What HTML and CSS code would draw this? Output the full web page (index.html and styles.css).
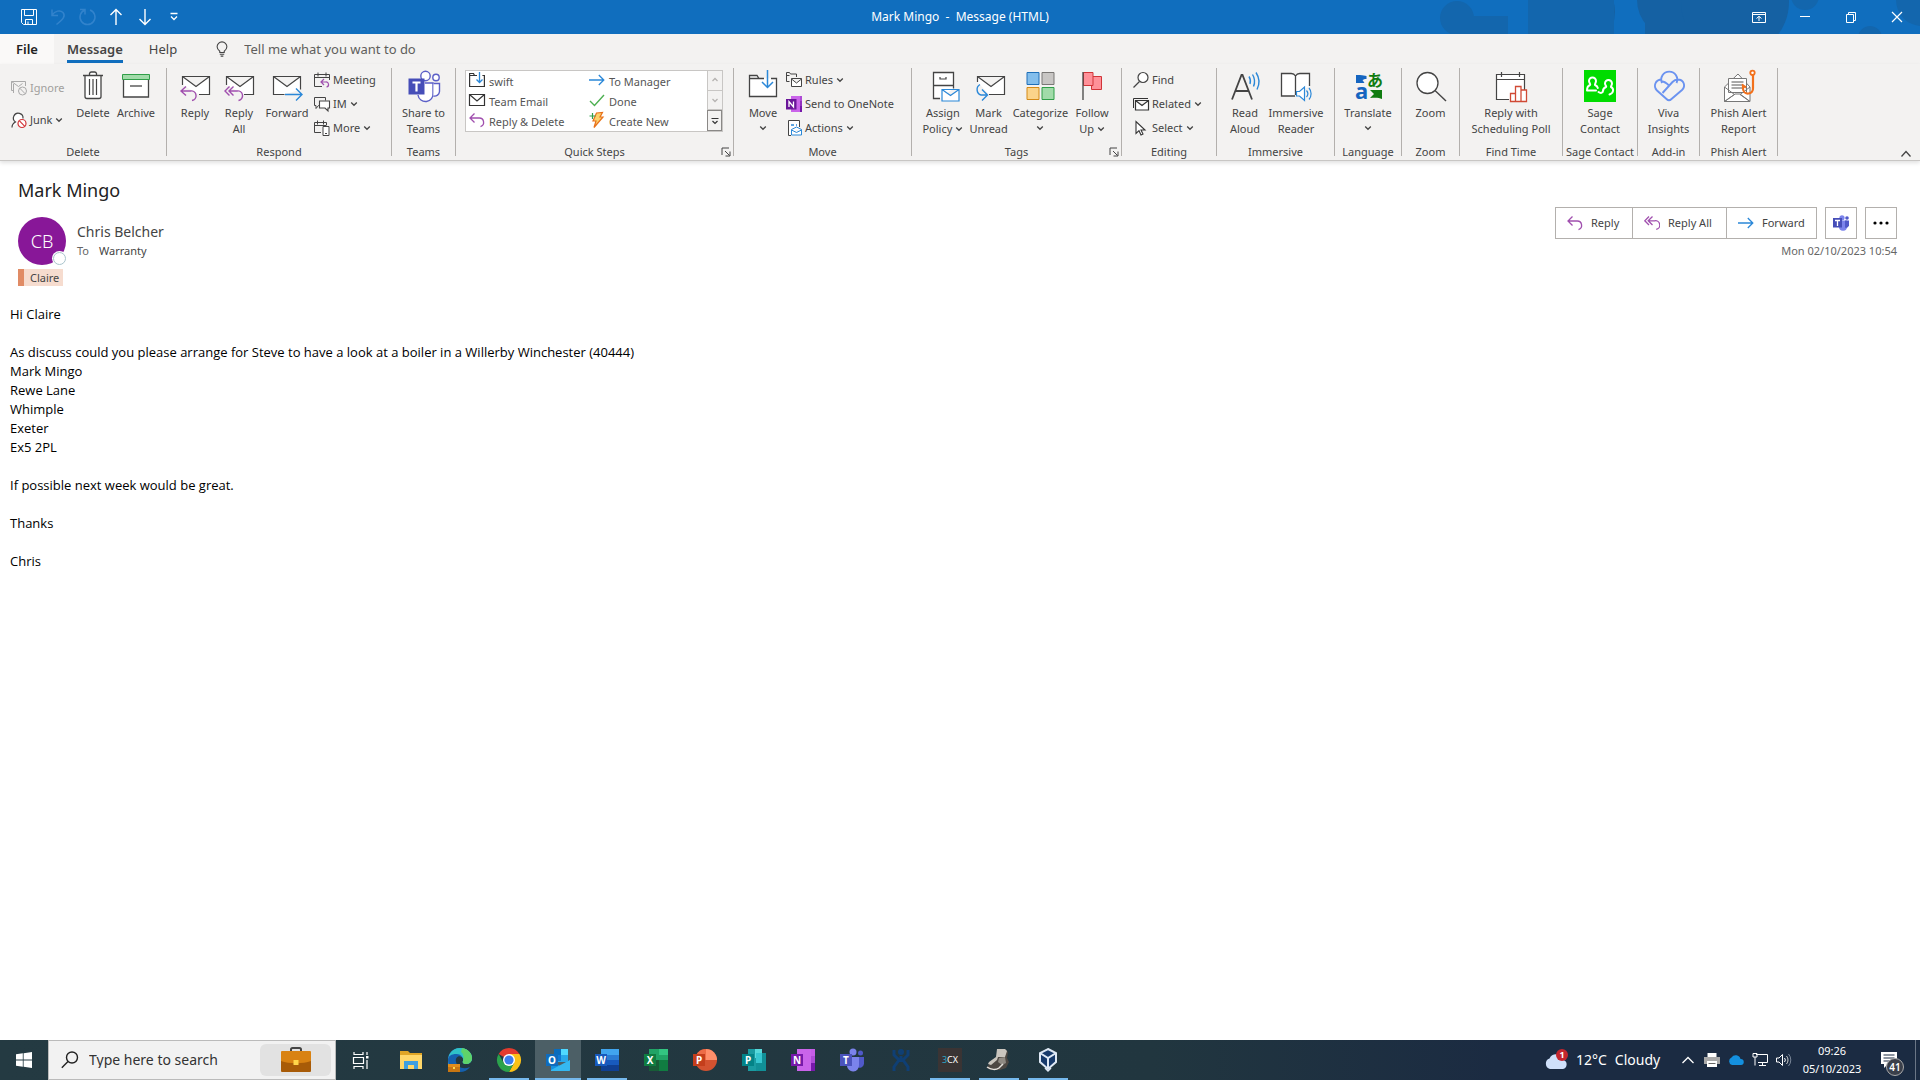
FILE: index.html
```
<!DOCTYPE html>
<html lang="en">
<head>
<meta charset="utf-8">
<title>Mark Mingo - Message (HTML)</title>
<link rel="stylesheet" href="styles.css">
</head>
<body>
<svg class="defs" aria-hidden="true">
  <symbol id="chev" viewBox="0 0 8 8"><path d="M1.200 2.500 4 5.300 6.800 2.500" fill="none" stroke="#444" stroke-width="1.300"/></symbol>
  <symbol id="arrow-reply" viewBox="0 0 16 16"><path d="M5.500 1.500 1 6l4.500 4.500M1 6h9a4.400 4.400 0 0 1 1.500 8.600" fill="none" stroke="#a04fae" stroke-width="1.300"/></symbol>
  <symbol id="arrow-all" viewBox="0 0 16 16"><path d="M5 1.500.8 5.800 5 10M8.500 1.500 4.200 5.800 8.500 10M4.200 5.800h6.500a4.300 4.300 0 0 1 1.500 8.500" fill="none" stroke="#a04fae" stroke-width="1.300"/></symbol>
  <symbol id="arrow-fwd" viewBox="0 0 16 16"><path d="M0 8h15M9.800 3l5 5-5 5" fill="none" stroke="#2b88d8" stroke-width="1.300"/></symbol>
  <symbol id="folder-move" viewBox="0 0 16 16"><path d="M.6 1.500h4l1 2H15.400v11H.6z" fill="#fff"/><path d="M8 3.500H5.500l-1-2H.6v13h14.800v-11h-2M.6 3.500h5" fill="none" stroke="#333" stroke-width="1.200"/><path d="M10.500 0v10.500M7.500 7.500l3 3 3-3" fill="none" stroke="#2b88d8" stroke-width="1.300"/></symbol>
  <symbol id="launch" viewBox="0 0 10 10"><path d="M1 8V1h7M4 4l4.500 4.500M9 4.500V9H4.500" fill="none" stroke="#444"/></symbol>
</svg>

<header class="titlebar">
  <svg class="clouds" viewBox="0 0 520 34" aria-hidden="true">
    <g class="soft"><circle cx="57" cy="18" r="17"/><rect x="50" y="16" width="58" height="18"/><circle cx="405" cy="-4" r="14"/><circle cx="470" cy="38" r="12"/><circle cx="522" cy="0" r="26"/></g>
    <g class="deep"><circle cx="172" cy="12" r="43"/><circle cx="275" cy="0" r="38"/><circle cx="335" cy="2" r="54"/><rect x="245" y="22" width="100" height="12"/></g>
    <g class="soft"><rect x="128" y="0" width="86" height="34"/></g>
  </svg>
  <div class="quick">
    <button aria-label="Save"><svg viewBox="0 0 18 18"><path d="M1.500 1.500h15v15h-13l-2-2zM4.500 1.500v6h9v-6M5.500 16.500v-5h7v5M8 13.500v3" stroke="#fff"/></svg></button>
    <button aria-label="Undo"><svg viewBox="0 0 18 18"><path d="M3 1.500v6h6M3 7C6 3 11 1.500 14 4.500c3 3.500 0 7-6.500 12" stroke="#3283cc" stroke-width="1.500"/></svg></button>
    <button aria-label="Redo"><svg viewBox="0 0 18 18"><path d="M2 1.500h5v5M7 2a7.500 7.500 0 1 0 5 0" stroke="#3283cc" stroke-width="1.500"/></svg></button>
    <button aria-label="Previous item"><svg viewBox="0 0 18 18"><path d="M9 17V1.500M3.500 7 9 1.500 14.500 7" stroke="#fff" stroke-width="1.400"/></svg></button>
    <button aria-label="Next item"><svg viewBox="0 0 18 18"><path d="M9 1v15.500M3.500 11 9 16.500 14.500 11" stroke="#fff" stroke-width="1.400"/></svg></button>
    <button aria-label="Customize Quick Access Toolbar"><svg viewBox="0 0 18 18"><path d="M5.500 5.500h7M6 8.500l3 3 3-3" stroke="#fff" stroke-width="1.300"/></svg></button>
  </div>
  <h1 class="caption">Mark Mingo&nbsp; - &nbsp;Message (HTML)</h1>
  <div class="window-btns">
    <button aria-label="Ribbon display options"><svg viewBox="0 0 14 14"><path d="M.5 2.500h13v10H.5zM.5 4.500h13M7 11V6.500M4.500 8.500 7 6.300l2.500 2.200" stroke="#fff"/></svg></button>
    <button aria-label="Minimize"><svg viewBox="0 0 14 14"><path d="M2 6.500h10" stroke="#fff"/></svg></button>
    <button aria-label="Restore"><svg viewBox="0 0 14 14"><path d="M2.500 4.500h7v8h-7zM4.500 4V2.500h7v8H10" stroke="#fff"/></svg></button>
    <button aria-label="Close"><svg viewBox="0 0 14 14"><path d="m2 2 10 10M12 2 2 12" stroke="#fff" stroke-width="1.200"/></svg></button>
  </div>
</header>

<nav class="tabs">
  <button class="tab file">File</button>
  <button class="tab active"><span>Message</span></button>
  <button class="tab">Help</button>
  <label class="tellme">
    <svg viewBox="0 0 16 18" aria-hidden="true"><path d="M5.500 13v-1.500C3.500 10 2.500 8.500 2.500 6.500a5.500 5.500 0 0 1 11 0c0 2-1 3.500-3 5V13zM5.500 15h5M6.500 17h3" fill="none" stroke="#444" stroke-width="1.200"/></svg>
    <input type="text" placeholder="Tell me what you want to do" aria-label="Tell me what you want to do">
  </label>
</nav>

<section class="ribbon" aria-label="Ribbon">
  <div class="group g-delete">
    <div class="tools">
      <div class="stack two">
        <button class="small off"><svg viewBox="0 0 16 16"><path d="M3 10.500H.500V1.500h14V6M.5 1.500l7 5 4-3M2.500 13V4" fill="none" stroke="#aaa"/><circle cx="11.500" cy="11" r="4" fill="#f3f2f1" stroke="#aaa"/><path d="m8.800 8.200 5.400 5.600" stroke="#aaa"/></svg>Ignore</button>
        <button class="small"><svg viewBox="0 0 16 16"><path d="M1 15.500c0-3 1.500-4.500 3.500-5.500A4.800 4.800 0 1 1 12 6.500" fill="#fff" stroke="#444" stroke-width="1.200"/><circle cx="11" cy="11.500" r="4" fill="#fff" stroke="#d13438" stroke-width="1.200"/><path d="m8.200 8.700 5.600 5.600" stroke="#d13438" stroke-width="1.200"/></svg>Junk<svg class="chev"><use href="#chev"/></svg></button>
      </div>
      <button class="big w38"><svg viewBox="0 0 32 32"><path d="M8 5.500h16v21a2 2 0 0 1-2 2H10a2 2 0 0 1-2-2zM6 5.500h20M12.500 5V3.500a2 2 0 0 1 2-1.500h3a2 2 0 0 1 2 1.500V5" fill="#fff" stroke="#444" stroke-width="1.300"/><path d="M12.500 9v16M16 9v16M19.500 9v16" stroke="#444" stroke-width="1.200"/></svg><span>Delete</span></button>
      <button class="big w48"><svg viewBox="0 0 32 32"><path d="M3.500 9h25v18h-25z" fill="#fff" stroke="#444" stroke-width="1.300"/><path d="M2.500 4.500h27v5h-27z" fill="#a1dba9" stroke="#2f9e48"/><path d="M10 16h12" stroke="#444" stroke-width="1.300"/></svg><span>Archive</span></button>
    </div>
    <div class="label"><span>Delete</span></div>
  </div>

  <div class="group g-respond">
    <div class="tools">
      <button class="big w40"><svg viewBox="0 0 32 32"><path d="M3.500 15V6.500h27v18H20M3.500 6.500 17 16.500l13.500-10" fill="#fff" stroke="#444" stroke-width="1.200"/><path d="M7 16.500 2 21l5 4.500M2 21h9.500a4.700 4.700 0 0 1 1.500 9.500" fill="none" stroke="#a04fae" stroke-width="1.400"/></svg><span>Reply</span></button>
      <button class="big w48"><svg viewBox="0 0 32 32"><path d="M3.500 15V6.500h27v18H21M3.500 6.500 17 16.500l13.500-10" fill="#fff" stroke="#444" stroke-width="1.200"/><path d="M6.500 16.500 2 21l4.500 4.500M10.500 16.500 6 21l4.500 4.500M6 21h8a4.700 4.700 0 0 1 1.500 9.500" fill="none" stroke="#a04fae" stroke-width="1.400"/></svg><span>Reply<br>All</span></button>
      <button class="big w48"><svg viewBox="0 0 32 32"><path d="M13.500 24.500H2.500v-18h27v13M2.500 6.500 16 16.500l13.500-10" fill="#fff" stroke="#444" stroke-width="1.200"/><path d="M14 24.500h17M25 18.500l6 6-6 6" fill="none" stroke="#2b88d8" stroke-width="1.400"/></svg><span>Forward</span></button>
      <div class="stack">
        <button class="small"><svg viewBox="0 0 16 16"><path d="M8 14.500H.500v-12h15V8M.5 5.500h15M4 .5v4M12 .5v4" fill="none" stroke="#444"/><path d="M10 7 7 10l3 3M7 10h4.500a2.500 2.500 0 0 1 1 5" fill="none" stroke="#a04fae" stroke-width="1.200"/></svg>Meeting</button>
        <button class="small"><svg viewBox="0 0 16 16"><path d="M5.500 9.500h-1l-2.500 3v-3H.5v-8h11v3" fill="none" stroke="#444"/><path d="M5.500 5h10v7h-1.500v3l-3-3H5.500z" fill="#fff" stroke="#444" stroke-width="1.100"/></svg>IM<svg class="chev"><use href="#chev"/></svg></button>
        <button class="small"><svg viewBox="0 0 16 16"><path d="M7 12.500H.5v-10h12V5M.5 5.500h12M3.500.5v4M9.500.5v4" fill="none" stroke="#444"/><path d="M9 6.500h6v9H9zM11 13.500h2" fill="#fff" stroke="#444"/></svg>More<svg class="chev"><use href="#chev"/></svg></button>
      </div>
    </div>
    <div class="label"><span>Respond</span></div>
  </div>

  <div class="group g-teams">
    <div class="tools center">
      <button class="big w58"><svg viewBox="0 0 32 32"><g fill="#fff" stroke="#5b5fc7" stroke-width="1.400"><circle cx="17.500" cy="6" r="4.700"/><circle cx="28" cy="7.500" r="3.200"/><path d="M17 13h8v10a7.500 7.500 0 0 1-15 2"/><path d="M25.500 13.500h6v8a5 5 0 0 1-6 4.500"/></g><path d="M.500 8.500h16v16H.500z" fill="#464eb8"/><path d="M4.500 12.500h8M8.500 12.500v9" stroke="#fff" stroke-width="2.200"/></svg><span>Share to<br>Teams</span></button>
    </div>
    <div class="label"><span>Teams</span></div>
  </div>

  <div class="group g-quick">
    <div class="tools">
      <div class="gallery">
        <div class="steps">
          <button><svg><use href="#folder-move"/></svg>swift</button>
          <button><svg><use href="#arrow-fwd"/></svg>To Manager</button>
          <button><svg viewBox="0 0 16 16"><path d="M.5 2.500h15v11H.5zM.5 2.500 8 9l7.500-6.500" fill="#fff" stroke="#333" stroke-width="1.200"/></svg>Team Email</button>
          <button><svg viewBox="0 0 16 16"><path d="m1 9 4.500 4.500L15 3" fill="none" stroke="#4caf50" stroke-width="1.400"/></svg>Done</button>
          <button><svg><use href="#arrow-reply"/></svg>Reply &amp; Delete</button>
          <button><svg viewBox="0 0 16 16"><path d="m7.500 1 6-.5-2.500 4.500h3L5 15.500l2-6.500H4z" fill="#fbd26a" stroke="#e8711c" stroke-width="1.200"/><path d="M3.500 1v6M.5 4h6" stroke="#2f9e48" stroke-width="1.200"/></svg>Create New</button>
        </div>
        <div class="scroll">
          <button aria-label="Scroll up" disabled><svg viewBox="0 0 8 8"><path d="M1.500 5 4 2.500 6.500 5" fill="none" stroke="#b5b3b1" stroke-width="1.300"/></svg></button>
          <button aria-label="Scroll down" disabled><svg viewBox="0 0 8 8"><path d="M1.500 3 4 5.500 6.500 3" fill="none" stroke="#b5b3b1" stroke-width="1.300"/></svg></button>
          <button aria-label="More quick steps"><svg viewBox="0 0 8 8"><path d="M.5 1.500h7M1.500 4 4 6.500 6.500 4" fill="none" stroke="#333" stroke-width="1.200"/></svg></button>
        </div>
      </div>
    </div>
    <div class="label"><span>Quick Steps</span><button class="launch" aria-label="Quick Steps options"><svg><use href="#launch"/></svg></button></div>
  </div>

  <div class="group g-move">
    <div class="tools">
      <button class="big w46"><svg viewBox="0 0 32 32"><path d="M2.500 5.500H10l2 3h17.500v18h-27z" fill="#fff"/><path d="M17 8.500h-5l-2-3H2.500v21h27v-18H24M2.500 8.500H12" fill="none" stroke="#444" stroke-width="1.300"/><path d="M20.500 0v17.500M15 12l5.500 5.500L26 12" fill="none" stroke="#2b88d8" stroke-width="1.500"/></svg><span>Move</span><svg class="chev"><use href="#chev"/></svg></button>
      <div class="stack">
        <button class="small"><svg viewBox="0 0 16 16"><path d="M3.500 9.500h-3v-9h3l1 1.500h6v3M.5 3.500h3" fill="none" stroke="#444"/><path d="M5.500 6.500h10v8h-10zM5.500 7l5 4 5-4" fill="#fff" stroke="#444"/></svg>Rules<svg class="chev"><use href="#chev"/></svg></button>
        <button class="small"><svg viewBox="0 0 16 16"><path d="M5 0h9.500v16H5z" fill="#ca64ea"/><path d="M14 0h2v5h-2z" fill="#ae4bd5"/><path d="M14 5h2v5h-2z" fill="#9332bf"/><path d="M14 10h2v6h-2z" fill="#7719aa"/><path d="M0 3h10.500v10.500H0z" fill="#6a1599"/><path d="M3 11V5.500L7.500 11V5.500" fill="none" stroke="#fff" stroke-width="1.300"/></svg>Send to OneNote</button>
        <button class="small"><svg viewBox="0 0 16 16"><path d="M5 15.500H2.500V.5h11V7" fill="#fff" stroke="#444"/><path d="M5 5h3M10 5h1" stroke="#2b88d8" stroke-width="1.600"/><path d="M5.500 9.500 10.500 7l5 2.500v5.500h-10zM5.500 10l5 2.500 5-2.500" fill="#fff" stroke="#2b88d8"/></svg>Actions<svg class="chev"><use href="#chev"/></svg></button>
      </div>
    </div>
    <div class="label"><span>Move</span></div>
  </div>

  <div class="group g-tags">
    <div class="tools">
      <button class="big w46"><svg viewBox="0 0 32 32"><path d="M13 28.500H6.500v-26h20v16M6.500 15.500h20" fill="#fff" stroke="#444" stroke-width="1.300"/><path d="M13 7v2h6V7" fill="none" stroke="#444" stroke-width="1.200"/><path d="M15 19.500h17v11.500H15zM15 19.500l8.500 6 8.500-6" fill="#fff" stroke="#2b88d8" stroke-width="1.200"/></svg><span>Assign<br>Policy<svg class="chev"><use href="#chev"/></svg></span></button>
      <button class="big w46"><svg viewBox="0 0 32 32"><path d="M4.500 12V6.500h27v18H16M4.500 6.500 18 16.500l13.500-10" fill="#fff" stroke="#444" stroke-width="1.200"/><path d="M7 14.500a5.800 5.800 0 0 0 1 10.500h5.500M9 19.500l5.500 5.500L9 30.500" fill="none" stroke="#2b88d8" stroke-width="1.400"/></svg><span>Mark<br>Unread</span></button>
      <button class="big w58"><svg viewBox="0 0 32 32"><path d="M3 2.500h12v12H3z" fill="#83beec" stroke="#1e6fb8"/><path d="M18 2.500h12v12H18z" fill="#c8c6c4" stroke="#797775"/><path d="M3 17.500h12v12H3z" fill="#fbd48a" stroke="#d48a17"/><path d="M18 17.500h12v12H18z" fill="#a1dba9" stroke="#2f9e48"/></svg><span>Categorize</span><svg class="chev"><use href="#chev"/></svg></button>
      <button class="big w46"><svg viewBox="0 0 32 32"><path d="M15.500 6.500h10v13h-10z" fill="#ff9199" stroke="#d13438"/><path d="M7.500 2.500h9.500v13H7.500z" fill="#ff9199" stroke="#d13438"/><path d="M7 2v28" stroke="#444" stroke-width="1.300"/></svg><span>Follow<br>Up<svg class="chev"><use href="#chev"/></svg></span></button>
    </div>
    <div class="label"><span>Tags</span><button class="launch" aria-label="Tags options"><svg><use href="#launch"/></svg></button></div>
  </div>

  <div class="group g-editing">
    <div class="tools">
      <div class="stack">
        <button class="small"><svg viewBox="0 0 16 16"><circle cx="10" cy="5.500" r="5" fill="#fff" stroke="#444" stroke-width="1.200"/><path d="M6.500 9.500.5 15.500" stroke="#444" stroke-width="1.200"/></svg>Find</button>
        <button class="small"><svg viewBox="0 0 16 16"><path d="M.5 12V2.500H15" fill="none" stroke="#333"/><path d="M2.500 4.500h13v9.500h-13zM2.500 4.500l6.500 5 6.500-5" fill="#fff" stroke="#333" stroke-width="1.200"/></svg>Related<svg class="chev"><use href="#chev"/></svg></button>
        <button class="small"><svg viewBox="0 0 16 16"><path d="M3 1.500v12l3-2.800 2 4.300 2-1-2-4h4z" fill="#fff" stroke="#333" stroke-width="1.100"/></svg>Select<svg class="chev"><use href="#chev"/></svg></button>
      </div>
    </div>
    <div class="label"><span>Editing</span></div>
  </div>

  <div class="group g-immersive">
    <div class="tools">
      <button class="big w40"><svg viewBox="0 0 32 32"><path d="M3 29.500 12.500 5h1L23 29.500M6.500 21h13" fill="none" stroke="#444" stroke-width="1.800"/><path d="M20 6.500a9 9 0 0 1 1 7.500M23.500 4.500a13 13 0 0 1 1 12M27 2.500a17 17 0 0 1 1 17" fill="none" stroke="#2b88d8" stroke-width="1.400"/></svg><span>Read<br>Aloud</span></button>
      <button class="big w62"><svg viewBox="0 0 32 32"><path d="M15 26H1.500V3.500H11a5 5 0 0 1 4.500 2.500A5 5 0 0 1 20 3.500h9.500V16M15.500 6v19" fill="#fff" stroke="#444" stroke-width="1.300"/><path d="M16.500 21.500h3l5-4.500v13.500l-5-4.500h-3z" fill="#fff" stroke="#2b88d8" stroke-width="1.200"/><path d="M26.500 20.500a5 5 0 0 1 0 6.500M29 18a9 9 0 0 1 0 11.500" fill="none" stroke="#2b88d8" stroke-width="1.200"/></svg><span>Immersive<br>Reader</span></button>
    </div>
    <div class="label"><span>Immersive</span></div>
  </div>

  <div class="group g-language">
    <div class="tools center">
      <button class="big w58"><svg viewBox="0 0 32 32"><path d="M4 5h4c3 0 4.500 1 6.500 1v3c-2 0-3 .5-4 1l2 3H4z" fill="#1565c0"/><text class="glyph-a" x="3" y="29">a</text><text class="glyph-ja" x="15" y="16">あ</text><path d="M18 20h12v9c-3-1.500-7-1.500-12-1l4-4z" fill="#107c10"/></svg><span>Translate</span><svg class="chev"><use href="#chev"/></svg></button>
    </div>
    <div class="label"><span>Language</span></div>
  </div>

  <div class="group g-zoom">
    <div class="tools center">
      <button class="big w48"><svg viewBox="0 0 32 32"><circle cx="12.500" cy="13" r="10.500" fill="#fff" stroke="#444" stroke-width="1.300"/><path d="M20 20.500 31 31" stroke="#444" stroke-width="1.400"/></svg><span>Zoom</span></button>
    </div>
    <div class="label"><span>Zoom</span></div>
  </div>

  <div class="group g-find">
    <div class="tools center">
      <button class="big w94"><svg viewBox="0 0 32 32"><path d="M14 29.500H1.500v-25h28V20M1.500 9.500h28M6.500 2v5M24.500 2v5" fill="#fff" stroke="#444" stroke-width="1.200"/><path d="M15.500 23.500h5v8h-5zM20.500 16.500h5.500v15h-5.500zM26 20h5.500v11.500H26z" fill="#fff" stroke="#d04a35" stroke-width="1.300"/></svg><span>Reply with<br>Scheduling Poll</span></button>
    </div>
    <div class="label"><span>Find Time</span></div>
  </div>

  <div class="group g-sage">
    <div class="tools center">
      <button class="big w58"><svg viewBox="0 0 32 32"><path d="M0 0h32v32H0z" fill="#00dc00"/><g fill="none" stroke="#fff" stroke-width="2" stroke-linecap="round" stroke-linejoin="round"><path d="M12 20.500H3c0-3 .5-4.500 3-5.500 1-1-1-2-1-4a3.500 3.500 0 0 1 7 0c0 2-1.500 3-1 4 1.500.6 2.500 1.500 2.800 3M14.500 22c2 1.500 4.500 1 4.500-1 0-2 .5-3 3-4 1-1-1-1.500-1-3.500a3.500 3.500 0 0 1 7 0c0 2-1.500 2.500-1 3.500 3 1.500 3 6-1.500 7.500"/></g></svg><span>Sage<br>Contact</span></button>
    </div>
    <div class="label"><span>Sage Contact</span></div>
  </div>

  <div class="group g-viva">
    <div class="tools center">
      <button class="big w48"><svg viewBox="0 0 32 32"><g fill="none" stroke="#6b93f0" stroke-width="1.900"><path d="M9 13a8 8 0 1 1 14.500 0M9 9.500c-7 0-9 7-5 11l9.500 8.500c1.500 1.500 3.500 1.500 5 0L29 20c4-4 2-10.500-4.500-10.500-2 0-3.500 1-5 2.500L9.500 23"/><path d="M9 11.500c2 0 3.500.5 7 4"/></g></svg><span>Viva<br>Insights</span></button>
    </div>
    <div class="label"><span>Add-in</span></div>
  </div>

  <div class="group g-phish">
    <div class="tools center">
      <button class="big w62"><svg viewBox="0 0 32 32"><path d="M1.500 17 15 4l12 13v14.500h-25.500z" fill="#fff" stroke="#777"/><path d="M5.500 8.500h18v14h-18z" fill="#fff" stroke="#777"/><path d="M8.500 12h12M8.500 15h12M8.500 18h12" stroke="#555"/><path d="m1.500 17 10 7.500-10 7M27 17l-10 7.500 10 7M1.500 31.500 12 24h5l10 7.500" fill="none" stroke="#777"/><circle cx="29.500" cy="2.800" r="2.200" fill="#fff" stroke="#f2711c" stroke-width="1.800"/><path d="M30 5v13a5 5 0 0 1-10 1v-3.500l3 2" fill="none" stroke="#f2711c" stroke-width="2.200"/></svg><span>Phish Alert<br>Report</span></button>
    </div>
    <div class="label"><span>Phish Alert</span></div>
  </div>
  <button class="collapse" aria-label="Collapse the ribbon"><svg viewBox="0 0 12 12"><path d="m1.500 8.500 4.500-5 4.500 5" fill="none" stroke="#444" stroke-width="1.300"/></svg></button>
</section>

<main class="message">
  <h2 class="subject">Mark Mingo</h2>
  <div class="head">
    <div class="avatar">CB<span class="presence"></span></div>
    <div class="who">
      <div class="from">Chris Belcher</div>
      <div class="to"><span>To</span>Warranty</div>
    </div>
    <div class="side">
      <div class="actions">
        <div class="joined">
          <button class="a1"><svg><use href="#arrow-reply"/></svg>Reply</button>
          <button class="a2"><svg><use href="#arrow-all"/></svg>Reply All</button>
          <button class="a3"><svg><use href="#arrow-fwd"/></svg>Forward</button>
        </div>
        <button class="square" aria-label="Share to Teams"><svg viewBox="0 0 16 16"><circle cx="9" cy="2.800" r="2.600" fill="#7b83eb"/><circle cx="14" cy="3" r="1.800" fill="#5059c9"/><path d="M6 5.500h8v6a4 4 0 0 1-8 .5z" fill="#7b83eb"/><path d="M12 5.500h4v5a3 3 0 0 1-4 2z" fill="#5059c9"/><path d="M0 3h9v9.500H0z" fill="#464eb8"/><path d="M2 5.500h5M4.500 5.500V11" stroke="#fff" stroke-width="1.300"/></svg></button>
        <button class="square" aria-label="More actions"><svg viewBox="0 0 16 16"><circle cx="2" cy="8" r="1.600"/><circle cx="8" cy="8" r="1.600"/><circle cx="14" cy="8" r="1.600"/></svg></button>
      </div>
      <time class="date">Mon 02/10/2023 10:54</time>
    </div>
  </div>
  <div class="category">Claire</div>
  <div class="body">
    <p>Hi Claire</p>
    <p>As discuss could you please arrange for Steve to have a look at a boiler in a Willerby Winchester (40444)<br>Mark Mingo<br>Rewe Lane<br>Whimple<br>Exeter<br>Ex5 2PL</p>
    <p>If possible next week would be great.</p>
    <p>Thanks</p>
    <p>Chris</p>
  </div>
</main>

<footer class="taskbar">
  <button class="start" aria-label="Start"><svg viewBox="0 0 16 16"><path d="M0 2.300 6.800 1.300v6.300H0zM7.600 1.200 16 0v7.600H7.600zM0 8.400h6.800v6.300L0 13.700zM7.600 8.400H16V16l-8.400-1.200z" fill="#fff"/></svg></button>
  <label class="search">
    <svg class="lens" viewBox="0 0 18 18" aria-hidden="true"><circle cx="11" cy="6.500" r="5.500" fill="none" stroke="#222" stroke-width="1.400"/><path d="M7 10.500.8 16.800" stroke="#222" stroke-width="1.400"/></svg>
    <input type="text" placeholder="Type here to search" aria-label="Type here to search">
    <span class="pill"><svg viewBox="0 0 32 26" aria-hidden="true"><path d="M11 4V2.500A1.500 1.500 0 0 1 12.500 1h7A1.500 1.500 0 0 1 21 2.500V4" fill="none" stroke="#444" stroke-width="2"/><path d="M1 5a1 1 0 0 1 1-1h28a1 1 0 0 1 1 1v11H1z" fill="#d98212"/><path d="M1 14c8 3 22 3 30 0v10a1 1 0 0 1-1 1H2a1 1 0 0 1-1-1z" fill="#a85b08"/><path d="M13.500 13h5v5h-5z" fill="#ffd54a"/></svg></span>
  </label>
  <div class="apps">
    <button class="view" aria-label="Task View"><svg class="s18" viewBox="0 0 18 18"><path d="M2 1v2.500h9V1M1.500 6.500h10v6h-10zM2 18v-2.500h9V18M15 1v3M15 9v9" fill="none" stroke="#fff" stroke-width="1.200"/><path d="M14 5h2.500v2.500H14z" fill="#fff"/></svg></button>
    <button aria-label="File Explorer"><svg viewBox="0 0 24 24"><path d="M1 3h8l2 2h12v16H1z" fill="#e0a526"/><path d="M1 7h22v14H1z" fill="#ffd76a"/><path d="M5 21v-8h14v8h-4v-4H9v4z" fill="#3f9fe0"/></svg></button>
    <button aria-label="Edge"><svg viewBox="0 0 24 24"><path d="M0 12C0 5 5 0 12 0c7 0 12 5 12 10 0 3-2 6-6 6-2 0-4-1-3-3 1-3-2-6-6-5-4 1-5 5-3 9H0z" fill="#2fa3dc"/><path d="M1 8C3 3 7 0 12 0c7 0 12 5 12 10 0 4-3 6-6 6-2 0-4-1-3-3 1-2 0-7-7-7-3 0-6 1-7 2z" fill="#2fc2c8"/><path d="M14 0c6 1 10 5 10 10 0 4-3 6-6 6-2 0-4-1-3-3 1-3 1-7-2-9z" fill="#5fd36a"/><path d="M0 12c0-4 4-6 8-6 3 0 5 1 6 3-4-2-7 1-6 5 1 5 7 8 14 5-2 3-6 5-10 5C5 24 0 19 0 12z" fill="#1560ad"/><path d="M0 16h12v8H0z" fill="#c87612"/><path d="M0 16h12v3H0z" fill="#e08d1c"/><path d="M5 19h2v2H5z" fill="#ffd54a"/></svg></button>
    <button class="run" aria-label="Chrome"><svg viewBox="0 0 24 24"><path d="M12 12 1.600 6a12 12 0 0 1 20.800 0z" fill="#e33b2e"/><path d="M12 12V6h10.400A12 12 0 0 1 12 24l5-9z" fill="#fbc116"/><path d="m12 12 5 3-5 9A12 12 0 0 1 1.600 6l5.200 9z" fill="#2ba24c"/><circle cx="12" cy="12" r="6" fill="#fff"/><circle cx="12" cy="12" r="4.600" fill="#3b7ded"/></svg></button>
    <button class="run current" aria-label="Outlook"><svg viewBox="0 0 24 24"><path d="M8 1h14v13H8z" fill="#28a8ea"/><path d="M8 1h7v6H8z" fill="#0a6cbd"/><path d="M15 1h7v6h-7z" fill="#50d9ff"/><path d="M8 7h7v6H8z" fill="#0f78d4"/><path d="M5 12l9 6 10-6v10a1 1 0 0 1-1 1H5z" fill="#1490df"/><path d="m5 22 19-10v10a1 1 0 0 1-1 1H5z" fill="#35b8f1"/><path d="M0 6h12v12H0z" fill="#0f6cbd"/><text x="6" y="16">O</text></svg></button>
    <button class="run" aria-label="Word"><svg viewBox="0 0 24 24"><path d="M6 1h18v6H6z" fill="#41a5ee"/><path d="M6 7h18v5H6z" fill="#2b7cd3"/><path d="M6 12h18v5H6z" fill="#185abd"/><path d="M6 17h18v6H6z" fill="#103f91"/><path d="M0 6h12v12H0z" fill="#185abd"/><text x="6" y="16">W</text></svg></button>
    <button aria-label="Excel"><svg viewBox="0 0 24 24"><path d="M5 1h10v11H5z" fill="#21a366"/><path d="M15 1h9v6h-9z" fill="#33c481"/><path d="M15 7h9v5h-9z" fill="#21a366"/><path d="M5 12h10v11H5z" fill="#185c37"/><path d="M15 12h9v11h-9z" fill="#107c41"/><path d="M0 6h12v12H0z" fill="#107c41"/><text x="6" y="16">X</text></svg></button>
    <button aria-label="PowerPoint"><svg viewBox="0 0 24 24"><circle cx="13" cy="12" r="11" fill="#d35230"/><path d="M13 1a11 11 0 0 1 11 11H13z" fill="#ff8f6b"/><path d="M2 12A11 11 0 0 1 13 1v11z" fill="#ed6c47"/><path d="M0 6h12v12H0z" fill="#c43e1c"/><text x="6" y="16">P</text></svg></button>
    <button aria-label="Publisher"><svg viewBox="0 0 24 24"><path d="M6 1h14v22H6z" fill="#1a9ba1"/><path d="M13 1h7v9h-7z" fill="#58d9db"/><path d="M14 5h10v18H14z" fill="#119097"/><path d="M14 5h6v10h-6z" fill="#37c6d0"/><path d="M0 6h12v12H0z" fill="#038387"/><text x="6" y="16">P</text></svg></button>
    <button aria-label="OneNote"><svg viewBox="0 0 24 24"><path d="M6 1h15v22H6z" fill="#ca64ea"/><path d="M20 1h4v7h-4z" fill="#c55de6"/><path d="M20 8h4v7h-4z" fill="#ae4bd5"/><path d="M20 15h4v8h-4z" fill="#7719aa"/><path d="M0 6h12v12H0z" fill="#7719aa"/><text x="6" y="16">N</text></svg></button>
    <button aria-label="Teams"><svg viewBox="0 0 24 24"><circle cx="13" cy="4" r="3.500" fill="#7b83eb"/><circle cx="20.500" cy="5" r="2.500" fill="#5059c9"/><path d="M17 9h7v7a4.500 4.500 0 0 1-7 3z" fill="#5059c9"/><path d="M7 9h12v8a6 6 0 0 1-12 1z" fill="#7b83eb"/><path d="M0 6h12v12H0z" fill="#4b53bc"/><text x="6" y="16">T</text></svg></button>
    <button aria-label="Keeper"><svg viewBox="0 0 24 24"><circle cx="12" cy="4" r="3" fill="#0f3f74"/><path d="M5 2v5l5 5-5 7v4M19 2v5l-5 5 5 7v4M12 8v6" fill="none" stroke="#0f3f74" stroke-width="3"/></svg></button>
    <button class="run" aria-label="3CX"><span class="cx"><i>3</i>CX</span></button>
    <button class="run" aria-label="Running shoe"><svg viewBox="0 0 24 24"><path d="m10 1 8 0 3 3-1 6 2 4-3 6-6 2H4l-4-2 2-4 8-6z" fill="#4d4843"/><path d="m10 1 8 0 2 2-2 6-7 0-1 3-6 5-3-1 1-2 7-5z" fill="#c9c5be"/><path d="m12 10 6-1 1 6-4 2-4-3z" fill="#8f8a83"/><path d="M0 19c4 3 9 3 12 1l4-4" fill="none" stroke="#e4e1dc" stroke-width="1.500"/></svg></button>
    <button class="run" aria-label="VirtualBox"><svg viewBox="0 0 24 24"><path d="m12 1 8 4v9l-8 7-8-7V5z" fill="#173a6b" stroke="#dfe9f5" stroke-width="2"/><path d="m4 5 8 5 8-5M12 10v10" fill="none" stroke="#dfe9f5" stroke-width="2"/><path d="m9 20 3 3 3-3" fill="none" stroke="#dfe9f5" stroke-width="1.500"/></svg></button>
  </div>
  <div class="tray">
    <button class="weather"><svg viewBox="0 0 24 22"><path d="M6 20a5.500 5.500 0 0 1-.5-10.500 7.500 7.500 0 0 1 14 1.500A4.700 4.700 0 0 1 19 20z" fill="#cfe0fa"/><circle cx="18" cy="6" r="6" fill="#c4262e"/><text x="18" y="9">1</text></svg><span>12°C</span><span>Cloudy</span></button>
    <button aria-label="Show hidden icons"><svg viewBox="0 0 16 16"><path d="m2.500 11 5.500-5.500 5.500 5.500" fill="none" stroke="#fff" stroke-width="1.300"/></svg></button>
    <button aria-label="Printer"><svg viewBox="0 0 16 16"><path d="M3.500 1h9v5h-9z" fill="#fff"/><path d="M0 5h16v7H0z" fill="#a9a9a9"/><path d="M3 9h10v6H3z" fill="#fff"/><path d="M4.500 11.500h7" stroke="#666"/></svg></button>
    <button aria-label="OneDrive"><svg viewBox="0 0 16 16"><path d="M4 13a4 4 0 0 1-.5-7.500 5 5 0 0 1 9 1.500A3 3 0 0 1 13 13z" fill="#1490df"/></svg></button>
    <button aria-label="Network"><svg viewBox="0 0 16 16"><path d="M4 2.500h11.500v8H6M10.500 10.500v3M7 13.500h7M1 1.500h4v3.500H1zM3 5v8.500" fill="none" stroke="#fff"/></svg></button>
    <button aria-label="Volume"><svg viewBox="0 0 16 16"><path d="M.5 6h2.500l3.500-3.500v11L3 10H.5zM8.500 6a3 3 0 0 1 0 4" fill="none" stroke="#fff"/><path d="M10.500 4a6 6 0 0 1 0 8" fill="none" stroke="#ccc"/><path d="M12.500 2a9 9 0 0 1 0 12" fill="none" stroke="#7a8698"/></svg></button>
    <button class="clock"><time>09:26</time><time>05/10/2023</time></button>
    <button class="notes" aria-label="Notifications"><svg viewBox="0 0 18 18"><path d="M1 1h16v12H8l-4 4v-4H1z" fill="#fff"/><path d="M3.500 4h11M3.500 7h11M3.500 10h8" stroke="#1b2b42" stroke-width="1.200"/></svg><span class="badge">41</span></button>
    <span class="peek"></span>
  </div>
</footer>
</body>
</html>
```
FILE: styles.css
```
* { box-sizing: border-box; }
body {
  margin: 0;
  min-height: 100vh;
  display: flex;
  flex-direction: column;
  background: #fff;
  color: #444;
  font: 11px/16px "Noto Sans", "Noto Sans CJK JP", sans-serif;
}
button { border: 0; padding: 0; margin: 0; background: none; font: inherit; color: inherit; }
input { border: 0; padding: 0; background: none; font: inherit; color: inherit; outline: 0; min-width: 0; }
svg { width: 16px; height: 16px; flex: none; display: block; overflow: visible; }
.defs { display: none; }

/* Title bar */
.titlebar {
  position: relative;
  display: grid;
  grid-template-columns: 1fr auto 1fr;
  align-items: center;
  height: 34px;
  background: #106ebe;
  color: #fff;
}
.clouds { position: absolute; top: 0; right: 0; width: 520px; height: 34px; overflow: hidden; }
.clouds .soft { fill: #1366ad; }
.clouds .deep { fill: #1561a3; }
.titlebar svg path { fill: none; }
.quick { display: flex; padding-left: 14px; }
.quick button { width: 29px; height: 34px; display: grid; place-items: center; }
.quick svg { width: 18px; height: 18px; }
.caption { margin: 0; font-size: 12px; font-weight: 400; }
.window-btns { position: relative; display: flex; justify-content: flex-end; }
.window-btns button { width: 46px; height: 34px; display: grid; place-items: center; }
.window-btns svg { width: 14px; height: 14px; }

/* Tabs */
.tabs { display: flex; height: 30px; background: #f3f2f1; font-size: 13px; }
.tab { display: flex; justify-content: center; align-items: center; padding: 0 13px; }
.tab.file { width: 54px; background: #faf9f8; color: #222; font-weight: 600; }
.tab.active { font-weight: 600; }
.tab.active span { line-height: 22px; padding-top: 3px; border-bottom: 3px solid #106ebe; }
.tellme { display: flex; align-items: center; gap: 14px; margin-left: 24px; color: #605e5c; }
.tellme input { width: 200px; }
.tellme input::placeholder { color: #605e5c; opacity: 1; }

/* Ribbon */
.ribbon {
  display: flex;
  padding-top: 4px;
  height: 97px;
  background: #f3f2f1;
  border-bottom: 1px solid #c8c6c4;
  box-shadow: 0 2px 4px #0000001f;
}
.group {
  display: flex;
  flex-direction: column;
  height: 88px;
  border-right: 1px solid #b3b0ad;
}
.tools { display: flex; flex: none; height: 76px; padding: 0 6px 0 8px; }
.tools.center { justify-content: center; padding: 0; }
.g-delete { width: 167px; }
.g-delete .tools { padding-left: 11px; }
.g-respond { width: 225px; }
.g-respond .stack { margin-left: 3px; }
.g-teams { width: 64px; }
.g-quick { width: 278px; }
.g-move { width: 178px; }
.g-move .tools { padding-left: 6px; }
.g-tags { width: 210px; }
.g-editing { width: 95px; }
.g-immersive { width: 118px; }
.g-language { width: 67px; }
.g-zoom { width: 58px; }
.g-find { width: 103px; }
.g-sage { width: 75px; }
.g-viva { width: 62px; }
.g-phish { width: 78px; }
.g-editing .tools { padding-left: 11px; }

.big { display: flex; flex-direction: column; align-items: center; gap: 3px; padding-top: 2px; white-space: nowrap; }
.big > svg:first-child { width: 32px; height: 32px; }
.big span .chev { display: inline-block; margin-left: 3px; }
.w38 { width: 38px; }
.w40 { width: 40px; }
.w46 { width: 46px; }
.w48 { width: 48px; }
.w58 { width: 58px; }
.w62 { width: 62px; }
.w94 { width: 94px; }
.stack { display: flex; flex-direction: column; }
.stack.two { width: 63px; padding-top: 4px; }
.small { display: flex; align-items: center; gap: 3px; height: 24px; white-space: nowrap; }
.two .small { height: 32px; }
.off { color: #a19f9d; }
.chev { width: 8px; height: 8px; }
.glyph-a { font: 700 22px "Noto Sans", sans-serif; fill: #1565c0; }
.glyph-ja { font: 700 16px "Noto Sans CJK JP", sans-serif; fill: #107c10; }

.label { display: grid; flex: none; grid-template-columns: 1fr auto 1fr; align-items: center; height: 16px; color: #444; white-space: nowrap; }
.label span { grid-column: 2; }
.launch { justify-self: end; margin-right: 2px; }
.launch svg { width: 10px; height: 10px; }

.gallery { display: flex; width: 258px; height: 62px; margin: 2px 0 0 1px; background: #fff; border: 1px solid #c8c6c4; color: #555; }
.steps { flex: 1; display: grid; grid-template-columns: 120px 1fr; grid-template-rows: repeat(3, 20px); padding-left: 3px; }
.steps button { display: flex; align-items: center; gap: 4px; padding-top: 1px; white-space: nowrap; }
.steps svg { margin-bottom: 3px; }
.scroll { display: flex; flex-direction: column; width: 15px; background: #f3f2f1; }
.scroll button { flex: 1; display: grid; place-items: center; border-left: 1px solid #c8c6c4; border-bottom: 1px solid #c8c6c4; }
.scroll button:last-child { border: 1px solid #8a8886; }
.scroll svg { width: 8px; height: 8px; }
.collapse { margin: auto 8px 0 auto; }
.collapse svg { width: 12px; height: 12px; }

/* Message */
.message { flex: 1; padding: 17px 23px 0 18px; }
.subject { margin: 0; color: #222; font-size: 18px; line-height: 24px; font-weight: 400; }
.head { display: flex; align-items: flex-start; margin-top: 5px; }
.avatar { position: relative; width: 48px; height: 48px; margin-top: 10px; border-radius: 50%; background: #881798; color: #fff; font-size: 18px; font-weight: 300; line-height: 48px; text-align: center; }
.presence { position: absolute; right: 0; bottom: 0; width: 13px; height: 13px; border-radius: 50%; background: #fff; border: 1px solid #a9c4cc; box-shadow: 0 0 0 1px #fff; }
.who { margin: 14px 0 0 11px; }
.from { font-size: 14px; line-height: 22px; }
.to { line-height: 16px; }
.to span { margin-right: 10px; color: #666; }
.side { margin-left: auto; }
.actions { display: flex; gap: 8px; }
.joined { display: flex; height: 32px; border: 1px solid #b3b0ad; }
.joined button { display: flex; align-items: center; gap: 8px; padding-left: 11px; }
.joined button + button { border-left: 1px solid #b3b0ad; }
.a1 { width: 76px; }
.a2 { width: 94px; }
.a3 { width: 90px; }
.square { width: 32px; height: 32px; display: grid; place-items: center; border: 1px solid #b3b0ad; }
.date { display: block; margin-top: 4px; text-align: right; color: #666; }
.category { width: 45px; margin-top: 4px; border-left: 6px solid #e08b65; background: #f6dccf; padding-left: 6px; line-height: 17px; color: #444; }
.body { margin: 19px 0 0 -8px; color: #000; font: 13px/19px "Open Sans", sans-serif; }
.body p { margin: 0 0 19px; }

/* Taskbar */
.taskbar { display: flex; height: 40px; background: linear-gradient(90deg, #243a42, #21363f 60%, #1b2b42 78%); color: #fff; }
.start { width: 48px; display: grid; place-items: center; }
.search { display: flex; align-items: center; width: 288px; padding: 0 4px 0 12px; background: #f2f2f2; border: 1px solid #bbb; color: #333; font-size: 14px; }
.search input { flex: 1; margin-left: 10px; }
.search input::placeholder { color: #333; opacity: 1; }
.search .lens { width: 18px; height: 18px; }
.pill { display: grid; place-items: center; width: 71px; height: 32px; border-radius: 6px; background: #e2e2e2; }
.pill svg { width: 32px; height: 26px; }
.apps { display: flex; gap: 1px; }
.apps button { width: 48px; display: grid; place-items: center; }
.apps .view { width: 50px; }
.apps svg { width: 24px; height: 24px; }
.apps .s18 { width: 18px; height: 18px; }
.apps text { font: 700 10px "Noto Sans", sans-serif; fill: #fff; text-anchor: middle; }
.apps .run { margin: 0 4px; width: 40px; box-shadow: inset 0 -2px #76b9ed; }
.apps .current { width: 46px; margin: 0 1px; background: #4c5f66; }
.cx { width: 24px; height: 24px; background: #3a3434; font-size: 9px; line-height: 24px; }
.cx i { font-style: normal; color: #2aa7c9; }
.tray { display: flex; align-items: center; margin-left: auto; }
.tray > button { display: grid; place-items: center; width: 24px; height: 40px; }
.tray > .weather { display: flex; align-items: center; gap: 8px; width: 132px; font-size: 14px; }
.weather svg { width: 24px; height: 22px; }
.weather text { font: 700 9px "Noto Sans", sans-serif; fill: #fff; text-anchor: middle; }
.tray > .clock { display: flex; flex-direction: column; justify-content: center; align-items: center; width: 60px; margin-left: 6px; line-height: 18px; }
.tray > .notes { position: relative; width: 53px; }
.notes svg { width: 18px; height: 18px; }
.badge { position: absolute; left: 24px; top: 18px; width: 18px; height: 18px; border-radius: 50%; border: 1px solid #aaa; background: #3a3f4a; line-height: 16px; font-weight: 600; font-size: 10px; }
.peek { height: 40px; width: 5px; border-left: 1px solid #6b7686; }
```
